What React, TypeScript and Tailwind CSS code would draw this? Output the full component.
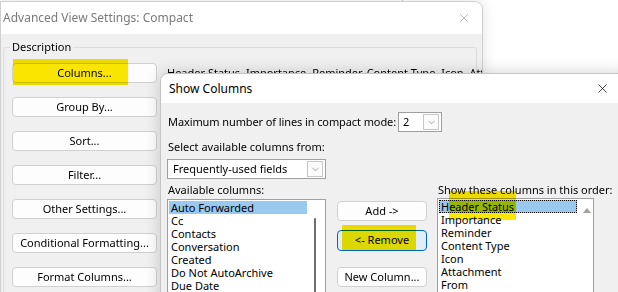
import { X, ChevronDown } from 'lucide-react';

const font = { fontFamily: '"Noto Sans", "Open Sans", sans-serif' };

function WinButton({ label, focused = false }: { label: string; focused?: boolean }) {
  return (
    <div
      className={
        focused
          ? 'h-[21px] w-[90px] rounded-[4px] border border-[#0067c0] bg-[#e0eef9] flex items-center justify-center text-[11px] text-black'
          : 'h-[20px] w-[90px] rounded-[4px] border border-[#d0d0d0] bg-[#fdfdfd] flex items-center justify-center text-[11px] text-black'
      }
    >
      {label}
    </div>
  );
}

function Highlight({ className }: { className: string }) {
  return <div className={`absolute bg-[#fbe700] mix-blend-multiply pointer-events-none ${className}`} />;
}

const leftButtons = ['Group By...', 'Sort...', 'Filter...', 'Other Settings...', 'Conditional Formatting...', 'Format Columns...'];
const available = ['Auto Forwarded', 'Cc', 'Contacts', 'Conversation', 'Created', 'Do Not AutoArchive', 'Due Date', 'Flag Status'];
const shown = ['Header Status', 'Importance', 'Reminder', 'Content Type', 'Icon', 'Attachment', 'From', 'Subject'];

export default function App() {
  return (
    <div className="relative w-[618px] h-[292px] overflow-hidden bg-white" style={font}>
      {/* something behind, peeking above */}
      <div className="absolute left-[402px] top-0 h-[3px] w-px bg-[#c8c8c8]" />

      {/* Advanced View Settings window */}
      <div className="absolute left-0 top-[1px] w-[483px] h-[300px] rounded-tr-[8px] border border-[#cfcfcf] bg-[#f0f0f0] shadow-[0_0_14px_rgba(0,0,0,0.12)] overflow-hidden">
        <div className="h-[32px] bg-white flex items-center justify-between pl-[2px] pr-[11px]">
          <span className="text-[12px] text-[#7a7a7a]">Advanced View Settings: Compact</span>
          <X className="w-[14px] h-[14px] text-[#9a9a9a]" strokeWidth={1.2} />
        </div>
        <div className="relative mt-[13px] ml-[2px] w-[474px] h-[260px] border border-[#dcdcdc] rounded-[3px] pl-[8px] pt-[15px]">
          <span className="absolute left-[6px] -top-[9px] px-[2px] bg-[#f0f0f0] text-[11px] leading-[16px] text-black">Description</span>
          <div className="flex items-center gap-[10px]">
            <div className="relative shrink-0 h-[20px] w-[145px] rounded-[4px] border border-[#d0d0d0] bg-[#fdfdfd] flex items-center justify-center text-[11px] text-black">
              Columns...
              <Highlight className="left-0 -top-[5px] w-[115px] h-[26px]" />
            </div>
            <span className="text-[11px] text-black whitespace-nowrap">Header Status, Importance, Reminder, Content Type, Icon, Attachment</span>
          </div>
          <div className="flex flex-col gap-[14px] mt-[14px]">
            {leftButtons.map(b => (
              <div key={b} className="h-[20px] w-[145px] rounded-[4px] border border-[#d0d0d0] bg-[#fdfdfd] flex items-center justify-center text-[11px] text-black">
                {b}
              </div>
            ))}
          </div>
        </div>
      </div>

      {/* Show Columns dialog */}
      <div className="absolute left-[160px] top-[73px] w-[470px] h-[240px] rounded-tl-[8px] border border-[#c4c4c4] bg-[#f0f0f0] shadow-[0_0_16px_rgba(0,0,0,0.18)] overflow-hidden">
        <div className="h-[29px] bg-white flex items-center justify-between pl-[8px] pr-[19px]">
          <span className="text-[12px] text-black">Show Columns</span>
          <X className="w-[15px] h-[15px] text-black" strokeWidth={1.2} />
        </div>
        <div className="pl-[6px] pt-[9px]">
          <div className="flex items-center gap-[2px]">
            <span className="text-[11px] tracking-[-0.1px] text-black pl-[1px]">Maximum number of lines in compact mode:</span>
            <div className="h-[20px] w-[44px] border border-[#a0a0a0] bg-white flex items-center justify-between pl-[4px] pr-[2px]">
              <span className="text-[11px] text-black">2</span>
              <div className="h-[16px] w-[16px] border border-[#c8c8c8] bg-[#fbfbfb] flex items-center justify-center">
                <ChevronDown className="w-[11px] h-[11px] text-[#606060]" strokeWidth={1.2} />
              </div>
            </div>
          </div>
          <div className="mt-[7px] text-[11px] leading-[16px] text-black pl-[1px]">Select available columns from:</div>
          <div className="mt-[4px] h-[20px] w-[159px] border border-[#a0a0a0] bg-white flex items-center justify-between pl-[5px] pr-[2px]">
            <span className="text-[11px] text-black">Frequently-used fields</span>
            <div className="h-[16px] w-[16px] border border-[#c8c8c8] bg-[#fbfbfb] flex items-center justify-center">
              <ChevronDown className="w-[11px] h-[11px] text-[#606060]" strokeWidth={1.2} />
            </div>
          </div>

          <div className="mt-[3px] flex">
            <div className="w-[159px] flex flex-col">
              <span className="text-[11px] leading-[16px] text-black pl-[1px]">Available columns:</span>
              <div className="relative mt-[1px] h-[120px] border border-[#a0a0a0] bg-white p-px">
                {available.map((a, i) => (
                  <div key={a} className={`h-[13px] w-[138px] pl-[2px] text-[11px] leading-[13px] text-black ${i === 0 ? 'bg-[#99c9ef]' : ''}`}>
                    {a}
                  </div>
                ))}
                <div className="absolute left-[146px] top-[18px] w-[2px] h-[110px] rounded-full bg-[#6e6e6e]" />
              </div>
            </div>

            <div className="ml-[11px] pt-[19px] flex flex-col">
              <WinButton label="Add ->" />
              <div className="relative mt-[9px]">
                <WinButton label="<- Remove" focused />
                <Highlight className="left-[5px] -top-[5px] w-[74px] h-[25px]" />
              </div>
              <div className="mt-[16px]">
                <WinButton label="New Column..." />
              </div>
            </div>

            <div className="ml-[10px] w-[157px] flex flex-col">
              <span className="text-[11px] leading-[16px] text-black pl-[1px] whitespace-nowrap">Show these columns in this order:</span>
              <div className="relative h-[120px] border border-[#a0a0a0] bg-white p-px">
                {shown.map((s, i) => (
                  <div
                    key={s}
                    className={`h-[13px] w-[138px] pl-[2px] text-[11px] leading-[13px] text-black ${i === 0 ? 'bg-[#99c9ef] outline outline-1 outline-dotted outline-black -outline-offset-1' : ''}`}
                  >
                    {s}
                  </div>
                ))}
                <div className="absolute left-[145px] top-[9px] w-0 h-0 border-l-[4px] border-r-[4px] border-b-[5px] border-l-transparent border-r-transparent border-b-[#a0a0a0]" />
                <Highlight className="left-[11px] -top-[8px] w-[67px] h-[29px]" />
              </div>
            </div>
          </div>
        </div>
      </div>
    </div>
  );
}
